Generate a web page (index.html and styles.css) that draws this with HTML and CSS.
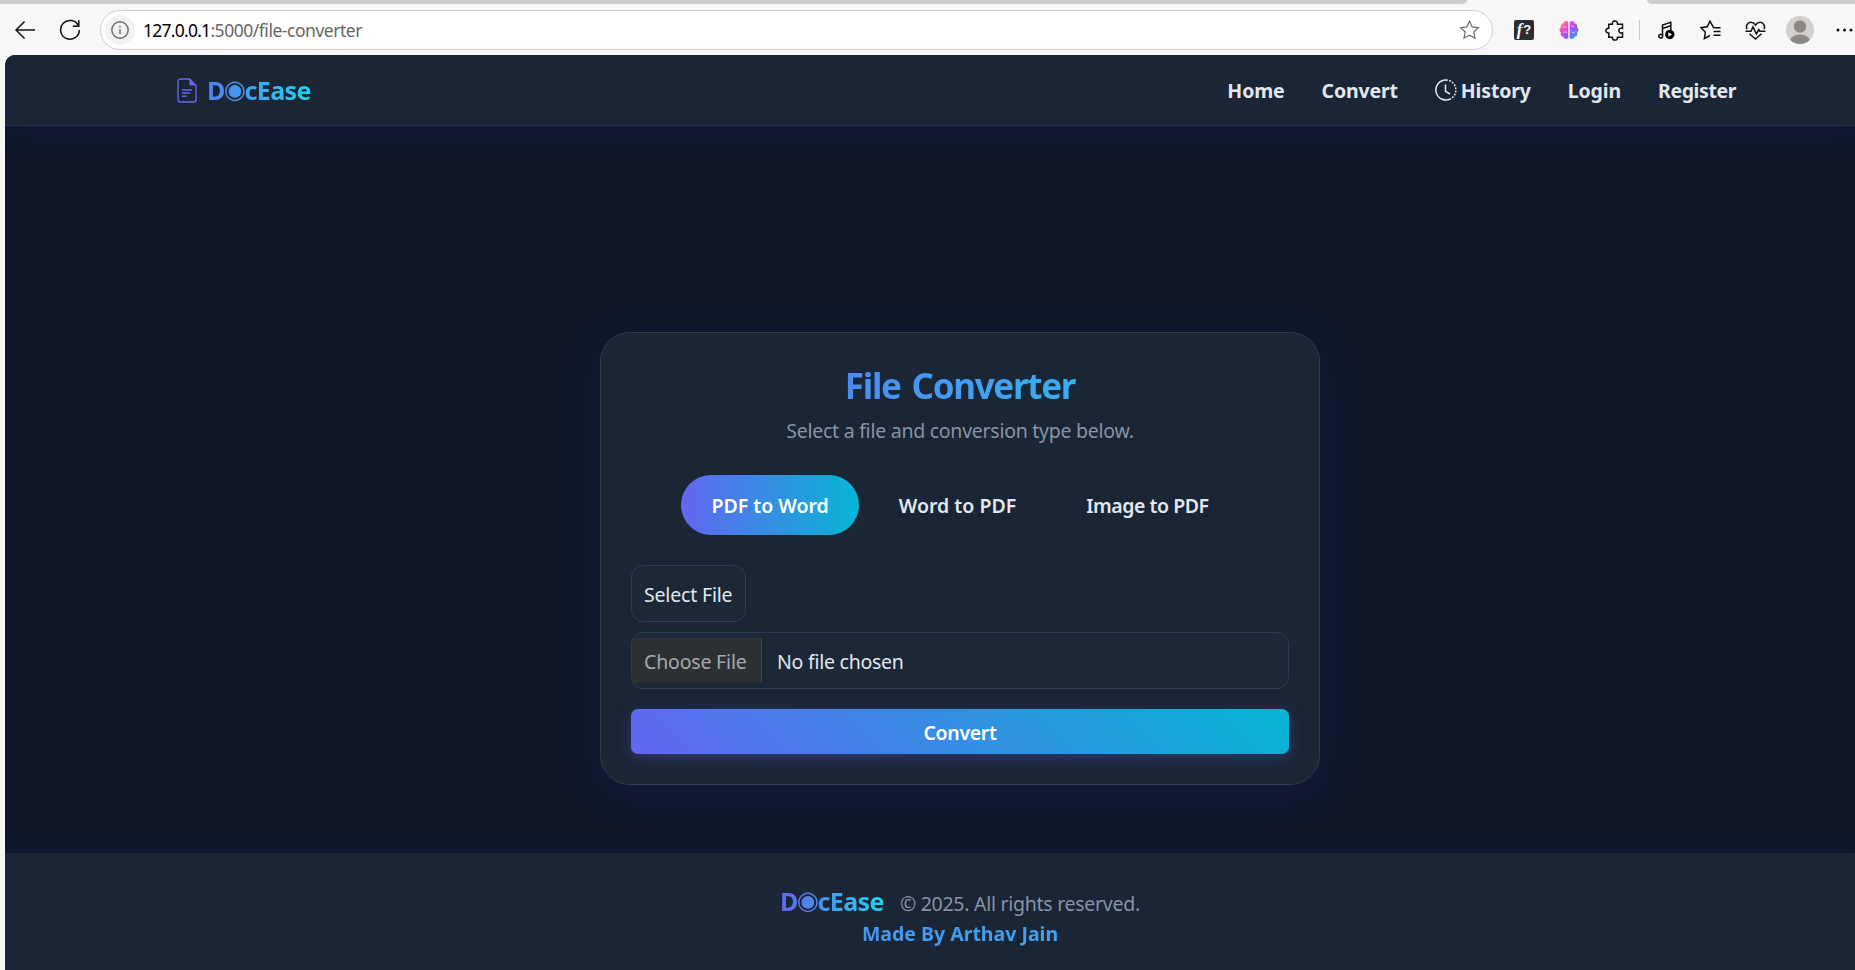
FILE: index.html
```html
<!DOCTYPE html>
<html lang="en">
<head>
<meta charset="utf-8">
<title>File Converter</title>
<link rel="stylesheet" href="styles.css">
</head>
<body>
<div class="browser">
  <div class="tabstrip"><span class="tab-left"></span><span class="tab-right"></span></div>
  <div class="toolbar">
    <svg class="back" width="21" height="20" viewBox="0 0 21 20"><path d="M9.500 1.500 1 10l8.500 8.500M1.200 10H20"/></svg>
    <svg class="reload" width="22" height="22" viewBox="0 0 22 22"><path d="M19.500 6.800A9.400 9.400 0 1 0 20.400 11M19.800 1.200v6h-6"/></svg>
    <div class="address">
      <span class="info"><svg width="18" height="18" viewBox="0 0 18 18"><circle cx="9" cy="9" r="8.200"/><path d="M9 8v5M9 5v1.500"/></svg></span>
      <span class="url"><span class="host">127.0.0.1</span>:5000/file-converter</span>
      <svg class="star" width="21" height="20" viewBox="0 0 20 20"><path d="m10 1.200 2.700 5.700 6.200.8-4.600 4.300 1.200 6.200-5.500-3-5.500 3 1.200-6.200L1.100 7.700l6.200-.8Z"/></svg>
    </div>
    <div class="actions">
      <span class="ext-f"><i>f</i>?</span>
      <svg class="brain" width="20" height="20" viewBox="0 0 20 20">
        <defs><linearGradient id="brainFill" x1="0" y1="0" x2="1" y2="1"><stop offset="0" stop-color="#ffa51f"/><stop offset=".35" stop-color="#ee45d6"/><stop offset=".6" stop-color="#8a5cf6"/><stop offset="1" stop-color="#12b5f5"/></linearGradient></defs>
        <path fill="url(#brainFill)" d="M9.300 2v16c-1.500 1.600-4.600 1-5-1.200C2 16.400 1 14 2 12.400 0 11.300 0 8.500 1.800 7.600 1.200 5.500 2.500 3.600 4.300 3.300 5 .9 8 .3 9.300 2Zm1.400 0v16c1.500 1.600 4.600 1 5-1.200 2.300-.4 3.300-2.800 2.300-4.400 2-1.100 2-3.900.2-4.800.6-2.100-.7-4-2.500-4.300C15 .9 12 .3 10.700 2Z"/>
        <path class="folds" d="M4 7c1.500-1 2 1 3.500 0M4.500 12.500c1.500-1.500 2 .5 3.500-.5M12.500 5.500c.5 1.500 2 1.500 2.500.5M12.500 11.500c1 1.500 2.500 1.500 3.500 0"/>
      </svg>
      <svg class="puzzle" width="20" height="21" viewBox="0 0 20 21"><path d="M3.800 4.200h3.500C7.200 2.200 8.300 1 9.900 1s2.700 1.200 2.600 3.200h5v4.200c-2.200-.6-3.700.5-3.700 2.200s1.500 2.800 3.700 2.200v4.400h-5c.1 1.900-1 2.900-2.600 2.900s-2.700-1-2.600-2.900H3.800v-4.200C2 13.200.9 12.100.9 10.600S2 8.200 3.800 8.300Z"/></svg>
      <span class="divider"></span>
      <svg class="music" width="17" height="19" viewBox="0 0 17 19"><path d="M4.500 15V4L12.800 1.200v8M4.500 7.500l8.300-2.700"/><circle cx="2.700" cy="15.200" r="1.900"/><circle class="disc" cx="11.800" cy="13.500" r="4.700"/><path class="play" d="m10.400 11.300 3.600 2.200-3.600 2.200Z"/></svg>
      <svg class="favs" width="21" height="20" viewBox="0 0 21 20"><path d="M13.600 7.700 10 1.200 7.300 6.700l-6.300 1 4.400 4.500-1 6.300 5.500-3M13.500 7.700h7M13.500 11.400h7M13.500 15.200h7"/></svg>
      <svg class="heart" width="21" height="19" viewBox="0 0 21 19"><path d="M2 8.300C.5 5 2.500 1.300 5.800 1.300c2 0 3.500 1 4.700 2.700 1.200-1.700 2.700-2.700 4.700-2.700 3.300 0 5.300 3.700 3.800 7M.5 10.300H6l2-4.500 3.300 7 2.500-4.300 1 1.800h5.700M4.500 12.700l6 5.300 6-5.300"/></svg>
      <svg class="avatar" width="28" height="28" viewBox="0 0 28 28"><clipPath id="avatarClip"><circle cx="14" cy="14" r="14"/></clipPath><g clip-path="url(#avatarClip)"><path class="avatar-bg" d="M0 0h28v28H0z"/><circle cx="14" cy="10.500" r="6.200"/><path d="M3.500 28c0-6 4-9.500 10.500-9.500s10.500 3.500 10.500 9.500Z"/></g></svg>
      <svg class="more" width="17" height="4" viewBox="0 0 17 4"><circle cx="2" cy="2" r="1.500"/><circle cx="8.500" cy="2" r="1.500"/><circle cx="15" cy="2" r="1.500"/></svg>
    </div>
  </div>
</div>
<div class="page">
  <header class="navbar">
    <a class="brand"><svg class="doc" width="20" height="25" viewBox="0 0 20 25"><path d="M3.500 1h9L19 7.500v14c0 1.600-1 2.500-2.500 2.500h-13C1.900 24 1 23 1 21.500v-18C1 2 1.900 1 3.500 1Z"/><path class="fold" d="M12.300.6 19.400 7.600h-5.600c-1 0-1.500-.6-1.500-1.500Z"/><path d="M5 12h10M5 15h8.500M5 18.200h4.500"/></svg><span class="brand-text">D<span class="eye">◉</span>cEase</span></a>
    <nav class="links">
      <a>Home</a>
      <a>Convert</a>
      <a class="history"><svg width="22" height="22" viewBox="0 0 22 22"><path d="M11 1a10 10 0 1 0 5 18.600"/><path class="dashes" d="M11 1a10 10 0 0 1 5 18.600"/><path d="M10.500 5.500v6.800l4.500 2.700"/></svg><span>History</span></a>
      <a>Login</a>
      <a class="register">Register</a>
    </nav>
  </header>
  <main class="content">
    <section class="card">
      <h1 class="title">File Converter</h1>
      <p class="subtitle">Select a file and conversion type below.</p>
      <div class="tabs">
        <button class="pill active">PDF to Word</button>
        <button class="pill">Word to PDF</button>
        <button class="pill image">Image to PDF</button>
      </div>
      <div class="select">Select File</div>
      <div class="file"><span class="choose">Choose File</span><span class="none">No file chosen</span></div>
      <button class="submit">Convert</button>
    </section>
  </main>
  <footer class="footer">
    <p class="copy"><span class="brand-text">D<span class="eye">◉</span>cEase</span><span class="rights">© 2025. All rights reserved.</span></p>
    <p class="made">Made By Arthav Jain</p>
  </footer>
</div>
</body>
</html>
```
FILE: styles.css
```css
* { box-sizing: border-box; }

body {
  margin: 0;
  height: 970px;
  overflow: hidden;
  background: #f7f7f7;
  font-family: "Noto Sans", "Open Sans", sans-serif;
  font-size: 19.5px;
  color: #e2e8f0;
}

p, h1 { margin: 0; }
button { border: 0; padding: 0; background: none; color: inherit; font: inherit; }

/* Browser chrome */
.browser { height: 55px; }
.tabstrip { height: 5px; display: flex; justify-content: space-between; }
.tab-left, .tab-right { height: 4px; background: #cdcdcd; }
.tab-left { width: 1467px; border-bottom-right-radius: 6px 4px; }
.tab-right { width: 208px; border-bottom-left-radius: 6px 4px; }

.toolbar { height: 50px; display: flex; align-items: center; padding-left: 15px; }
.toolbar svg { flex: none; fill: none; stroke: #111; stroke-width: 1.5; }
.reload { margin-left: 23px; }
.address {
  width: 1393px;
  height: 40px;
  margin-left: 19px;
  padding: 0 12px 0 4px;
  display: flex;
  align-items: center;
  background: #fff;
  border: 1px solid #cfcfcf;
  border-radius: 20px;
}
.info { width: 30px; height: 30px; display: grid; place-items: center; border-radius: 50%; background: #f3f3f3; }
.toolbar .info svg { stroke: #6a6a6a; stroke-width: 1.4; }
.url { margin: -1px 0 0 8px; font-size: 17.5px; letter-spacing: -0.47px; color: #666; }
.host { letter-spacing: -0.75px; color: #000; }
.toolbar .star { margin-left: auto; stroke: #6a6a6a; stroke-width: 1.2; }

.actions { flex: none; display: flex; align-items: center; padding-left: 21px; }
.ext-f {
  width: 20px;
  height: 20px;
  display: flex;
  justify-content: center;
  align-items: center;
  gap: 1px;
  border-radius: 2px;
  background: #2d2d2d;
  color: #fff;
  font: 700 13px/20px "Liberation Sans", sans-serif;
}
.ext-f i { font: italic 700 17px/20px "Liberation Serif", serif; }
.brain { margin-left: 25px; }
.toolbar .brain { stroke: none; }
.toolbar .brain .folds { stroke: #f3ddff; stroke-width: 0.9; }
.puzzle { margin-left: 26px; }
.divider { width: 1px; height: 20px; margin-left: 14px; background: #c8c8c8; }
.music { margin-left: 18px; }
.music .disc { fill: #000; stroke: none; }
.music .play { fill: #fff; stroke: none; }
.favs { margin-left: 25px; }
.heart { margin-left: 24px; }
.avatar { margin-left: 20px; }
.toolbar .avatar { stroke: none; fill: #8b8785; }
.avatar-bg { fill: #d3d1cd; }
.more { margin-left: 22px; }
.toolbar .more { fill: #111; stroke: none; }

/* Page */
.page {
  margin-left: 5px;
  height: 915px;
  display: flex;
  flex-direction: column;
  background: #0e1628;
  border-top-left-radius: 10px;
  overflow: hidden;
}

.navbar {
  flex: none;
  height: 71px;
  padding: 0 119px 0 172px;
  display: flex;
  justify-content: space-between;
  align-items: center;
  background: #1a2535;
  border-bottom: 1px solid #232f50;
  box-shadow: 0 4px 30px rgba(79, 70, 229, 0.12);
}
.brand { display: flex; align-items: center; gap: 10px; }
.doc { fill: none; stroke: #6366f1; stroke-width: 1.4; }
.doc .fold { fill: #6366f1; stroke: none; }
.brand-text {
  font-size: 25px;
  font-weight: 700;
  line-height: 30px;
  letter-spacing: -0.6px;
  background: linear-gradient(90deg, #6366f1, #22d3ee);
  -webkit-background-clip: text;
  background-clip: text;
  color: transparent;
}
.brand .brand-text { background-image: linear-gradient(90deg, #5580f1, #22d3ee); }
.eye { margin: 0 -1.5px 0 -1px; font: 700 25.5px/0 "DejaVu Sans", sans-serif; letter-spacing: 0; vertical-align: 2px; }

.links { display: flex; align-items: center; gap: 37px; font-weight: 700; letter-spacing: -0.15px; }
.history { display: flex; align-items: center; gap: 4px; }
.history svg { fill: none; stroke: #e2e8f0; stroke-width: 1.5; }
.history .dashes { stroke-dasharray: 1.8 1.4; }
.register { letter-spacing: -0.4px; }

.content { flex: 1; display: flex; justify-content: center; align-items: flex-start; padding: 206px 0 0 60px; }

.card {
  flex: none;
  width: 720px;
  height: 453px;
  padding: 30px;
  display: flex;
  flex-direction: column;
  background: #1a2535;
  border: 1px solid #303d4f;
  border-radius: 30px;
  box-shadow: 0 8px 40px rgba(79, 70, 229, 0.13);
}
.title {
  padding-top: 1px;
  line-height: 43px;
  font-size: 35px;
  font-weight: 700;
  letter-spacing: -1.3px;
  word-spacing: 3px;
  text-align: center;
  background: linear-gradient(90deg, #6366f1, #22d3ee);
  -webkit-background-clip: text;
  background-clip: text;
  color: transparent;
}
.subtitle { margin-top: 9px; line-height: 30px; letter-spacing: -0.26px; text-align: center; color: #8793a7; }

.tabs { display: flex; justify-content: center; gap: 10px; margin-top: 29px; }
.pill { height: 60px; padding: 1px 30px 0; border-radius: 30px; font-weight: 600; }
.pill.active { background: linear-gradient(90deg, #6366f1, #06b6d4); color: #fff; }
.pill.image { letter-spacing: -0.45px; }

.select, .file {
  height: 57px;
  display: flex;
  align-items: center;
  border: 1px solid #303d4f;
  border-radius: 12px;
  background: #1c2738;
  letter-spacing: -0.18px;
}
.select { align-self: flex-start; width: 115px; margin-top: 30px; padding: 2px 0 0 12px; }
.file { margin-top: 10px; overflow: hidden; }
.choose {
  width: 130px;
  height: 45px;
  padding: 1px 0 0 12px;
  display: flex;
  align-items: center;
  background: #2c3033;
  border-right: 1px solid #3a4452;
  color: #a4a8ad;
}
.none { margin: 1px 0 0 15px; letter-spacing: -0.25px; }

.submit {
  height: 45px;
  margin-top: 20px;
  padding-top: 1px;
  border-radius: 7px;
  background: linear-gradient(45deg, #6366f1, #06b6d4);
  box-shadow: 0 4px 15px rgba(99, 102, 241, 0.3);
  color: #fff;
  font-weight: 600;
  letter-spacing: -0.35px;
}

.footer {
  flex: none;
  height: 117px;
  padding: 33px 112px 0 172px;
  background: #1a2535;
  box-shadow: 0 -4px 20px rgba(79, 70, 229, 0.08);
}
.footer p { line-height: 30px; }
.copy { display: flex; justify-content: center; align-items: baseline; gap: 16px; }
.rights { letter-spacing: -0.27px; color: #8793a7; }
.made {
  text-align: center;
  font-weight: 700;
  background: linear-gradient(90deg, #6366f1, #22d3ee);
  -webkit-background-clip: text;
  background-clip: text;
  color: transparent;
}
```
